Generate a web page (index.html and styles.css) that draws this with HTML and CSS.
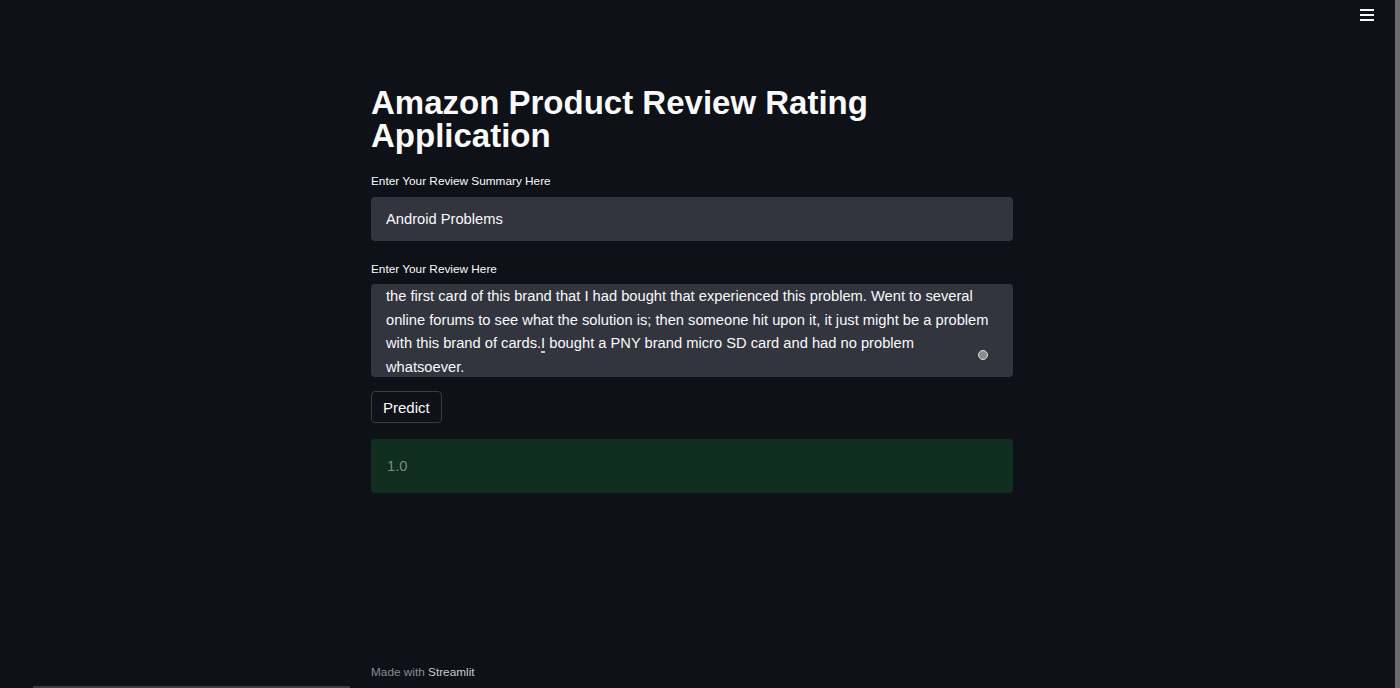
FILE: index.html
```html
<!DOCTYPE html>
<html>
<head>
<meta charset="utf-8">
<link rel="stylesheet" href="styles.css">
</head>
<body>
<div class="page">
  <header class="topbar">
    <button class="menu" aria-label="menu">
      <svg width="14" height="12" viewBox="0 0 14 12"><rect x="0" y="0" width="14" height="2" fill="#fafafa"/><rect x="0" y="5" width="14" height="2" fill="#fafafa"/><rect x="0" y="10" width="14" height="2" fill="#fafafa"/></svg>
    </button>
  </header>
  <main class="main">
    <h1 class="title">Amazon Product Review Rating Application</h1>
    <div class="field">
      <label class="label">Enter Your Review Summary Here</label>
      <div class="input">Android Problems</div>
    </div>
    <div class="field field-area">
      <label class="label label-area">Enter Your Review Here</label>
      <div class="textarea">
        <span class="line">the first card of this brand that I had bought that experienced this problem. Went to several</span>
        <span class="line">online forums to see what the solution is; then someone hit upon it, it just might be a problem</span>
        <span class="line">with this brand of cards.<span class="caret">I</span> bought a PNY brand micro SD card and had no problem</span>
        <span class="line">whatsoever.</span>
        <span class="cursor"></span>
      </div>
    </div>
    <button class="btn">Predict</button>
    <div class="result">1.0</div>
  </main>
  <footer class="footer">Made with <span class="brand">Streamlit</span></footer>
</div>
<div class="vscroll"></div>
<div class="hscroll"></div>
</body>
</html>
```
FILE: styles.css
```css
* { box-sizing: border-box; }
html, body {
  margin: 0;
  padding: 0;
  height: 100%;
  background: #0e1117;
  color: #fafafa;
  font-family: "Liberation Sans", Arial, sans-serif;
  overflow: hidden;
}
.page {
  height: 688px;
  display: flex;
  flex-direction: column;
}
.topbar {
  height: 0;
  display: flex;
  justify-content: flex-end;
  padding-right: 26px;
}
.menu {
  background: none;
  border: none;
  padding: 0;
  margin-top: 9px;
  height: 12px;
  display: flex;
}
.main {
  width: 642px;
  margin-left: 371px;
  padding-top: 86px;
  display: flex;
  flex-direction: column;
  flex: 1;
}
.title {
  margin: 0;
  font-size: 33px;
  line-height: 33px;
  font-weight: 700;
  color: #fafafa;
  letter-spacing: 0;
}
.field {
  display: flex;
  flex-direction: column;
  margin-top: 22px;
}
.field-area { margin-top: 21px; }
.label {
  font-size: 11.8px;
  line-height: 15px;
  color: #fafafa;
  margin-bottom: 8px;
}
.label-area { margin-bottom: 7px; }
.input {
  height: 44px;
  background: #32343e;
  border-radius: 4px;
  padding: 0 15px;
  font-size: 14.7px;
  line-height: 44px;
  color: #fafafa;
}
.textarea {
  position: relative;
  height: 93px;
  background: #32343e;
  border-radius: 4px;
  padding: 1px 15px 0;
  font-size: 14.7px;
  line-height: 23.6px;
  color: #fafafa;
  overflow: hidden;
  display: flex;
  flex-direction: column;
}
.line { display: block; white-space: nowrap; }
.caret {
  border-bottom: 2px solid #c8c8c8;
}
.cursor {
  position: absolute;
  left: 607px;
  top: 66px;
  width: 10px;
  height: 10px;
  border-radius: 50%;
  background: #8c8c8c;
  border: 1.5px solid #e0e0e0;
}
.btn {
  align-self: flex-start;
  margin-top: 14px;
  height: 32px;
  padding: 0 11px;
  background: #0e1117;
  border: 1px solid #3a3c44;
  border-radius: 4px;
  color: #fafafa;
  font-family: "Liberation Sans", Arial, sans-serif;
  font-size: 15px;
}
.result {
  margin-top: 16px;
  height: 54px;
  background: #0f2e20;
  border-radius: 4px;
  padding: 0 16px;
  line-height: 54px;
  font-size: 14.7px;
  color: #7e8a84;
}
.footer {
  width: 642px;
  margin-left: 371px;
  padding-bottom: 9px;
  font-size: 11.8px;
  color: #8a8c93;
}
.brand { color: #c9cace; }
.vscroll {
  position: fixed;
  right: 0;
  top: 0;
  width: 5px;
  height: 100%;
  background: #6c6c6c;
}
.hscroll {
  position: fixed;
  left: 33px;
  bottom: 0;
  width: 317px;
  height: 2px;
  background: #3b3d45;
}
```
